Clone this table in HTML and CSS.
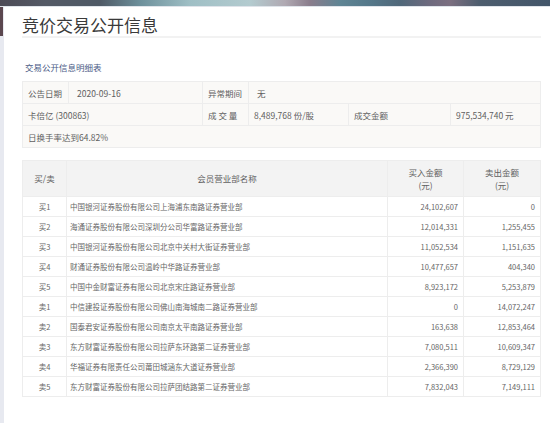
FILE: index.html
```html
<!DOCTYPE html>
<html lang="zh-CN">
<head>
<meta charset="utf-8">
<title>竞价交易公开信息</title>
<link rel="stylesheet" href="styles.css">
</head>
<body>
<div class="topbar"></div>
<div class="page">
  <aside class="rail"><div class="rail-top"></div></aside>
  <main class="panel">
    <h1 class="title">竞价交易公开信息</h1>
    <h2 class="subtitle">交易公开信息明细表</h2>
    <table class="info">
      <colgroup><col class="c1"><col class="c2"><col class="c3"><col class="c4"><col class="c5"><col class="c6"></colgroup>
      <tr><td>公告日期</td><td class="pl8">2020-09-16</td><td>异常期间</td><td colspan="3" class="pl8">无</td></tr>
      <tr><td colspan="2">卡倍亿 (300863)</td><td class="spaced">成 交 量</td><td>8,489,768 份/股</td><td>成交金额</td><td>975,534,740 元</td></tr>
      <tr><td colspan="6">日换手率达到64.82%</td></tr>
    </table>
    <table class="detail">
      <colgroup><col class="d1"><col class="d2"><col class="d3"><col class="d4"></colgroup>
      <thead>
        <tr><th>买/卖</th><th>会员营业部名称</th><th>买入金额<br>(元)</th><th>卖出金额<br>(元)</th></tr>
      </thead>
      <tbody>
        <tr><td class="side">买1</td><td>中国银河证券股份有限公司上海浦东南路证券营业部</td><td class="num">24,102,607</td><td class="num">0</td></tr>
        <tr><td class="side">买2</td><td>海通证券股份有限公司深圳分公司华富路证券营业部</td><td class="num">12,014,331</td><td class="num">1,255,455</td></tr>
        <tr><td class="side">买3</td><td>中国银河证券股份有限公司北京中关村大街证券营业部</td><td class="num">11,052,534</td><td class="num">1,151,635</td></tr>
        <tr><td class="side">买4</td><td>财通证券股份有限公司温岭中华路证券营业部</td><td class="num">10,477,657</td><td class="num">404,340</td></tr>
        <tr><td class="side">买5</td><td>中国中金财富证券有限公司北京宋庄路证券营业部</td><td class="num">8,923,172</td><td class="num">5,253,879</td></tr>
        <tr><td class="side">卖1</td><td>中信建投证券股份有限公司佛山南海城南二路证券营业部</td><td class="num">0</td><td class="num">14,072,247</td></tr>
        <tr><td class="side">卖2</td><td>国泰君安证券股份有限公司南京太平南路证券营业部</td><td class="num">163,638</td><td class="num">12,853,464</td></tr>
        <tr><td class="side">卖3</td><td>东方财富证券股份有限公司拉萨东环路第二证券营业部</td><td class="num">7,080,511</td><td class="num">10,609,347</td></tr>
        <tr><td class="side">卖4</td><td>华福证券有限责任公司莆田城涵东大道证券营业部</td><td class="num">2,366,390</td><td class="num">8,729,129</td></tr>
        <tr><td class="side">卖5</td><td>东方财富证券股份有限公司拉萨团结路第二证券营业部</td><td class="num">7,832,043</td><td class="num">7,149,111</td></tr>
      </tbody>
    </table>
  </main>
</div>
</body>
</html>
```

FILE: styles.css
```css
html, body {
  margin: 0;
  padding: 0;
  background: #ffffff;
}
body {
  width: 550px;
  height: 426px;
  overflow: hidden;
  font-family: "Noto Sans CJK SC", "Liberation Sans", sans-serif;
  color: #666;
}
.topbar {
  height: 6px;
  background: linear-gradient(90deg,
    #4d4b56 0px, #545a66 45px, #4f5a66 100px, #6d909b 140px,
    #9fbfc5 190px, #b3cbcf 250px, #b0a9b2 285px, #8a7d8c 310px,
    #5f8594 340px, #55788a 370px, #50687a 400px, #6e6a7e 430px,
    #7b6f80 450px, #4d5d6e 480px, #43566a 550px);
  border-bottom: 1px solid #dfe4ea;
}
.page {
  display: flex;
  height: 416px;
}
.rail {
  width: 4px;
  background: #e7e9f0;
  flex: none;
}
.rail-top {
  height: 29px;
  width: 3px;
  background: #5b474f;
}
.panel {
  flex: 1;
  padding: 0 10px 0 18px;
}
.title {
  margin: 0;
  padding-top: 6px;
  font-size: 17px;
  line-height: 23px;
  font-weight: normal;
  color: #3a3a3a;
  border-bottom: 2px solid #f2f2f2;
}
.subtitle {
  margin: 23px 0 8px 3px;
  font-size: 8.5px;
  line-height: 12px;
  font-weight: normal;
  color: #4a5a85;
}
table {
  width: 518px;
  border-collapse: collapse;
  table-layout: fixed;
}
.info {
  background: #faf9f7;
  font-size: 8.5px;
}
.info .c1 { width: 46px; }
.info .c2 { width: 134px; }
.info .c3 { width: 46px; }
.info .c4 { width: 100px; }
.info .c5 { width: 102px; }
.info .c6 { width: 90px; }
.info td {
  height: 21px;
  padding: 0 5px;
  border: 1px solid #ededed;
  white-space: nowrap;
  line-height: 12px;
  color: #606060;
}
.info td.pl8 { padding-left: 8px; }
.detail {
  margin-top: 12px;
  font-size: 7.5px;
}
.detail .d1 { width: 44px; }
.detail .d2 { width: 321px; }
.detail .d3 { width: 76px; }
.detail .d4 { width: 77px; }
.detail th {
  height: 35px;
  background: #f3f3f3;
  font-weight: normal;
  font-size: 8.5px;
  line-height: 13px;
  color: #606060;
  border: 1px solid #ededed;
  padding: 0;
}
.detail td {
  height: 19px;
  padding: 0 3px;
  border: 1px solid #ededed;
  line-height: 11px;
  white-space: nowrap;
  color: #666;
}
.detail td.side { text-align: center; }
.detail td.num { text-align: right; padding-right: 5px; }
```
